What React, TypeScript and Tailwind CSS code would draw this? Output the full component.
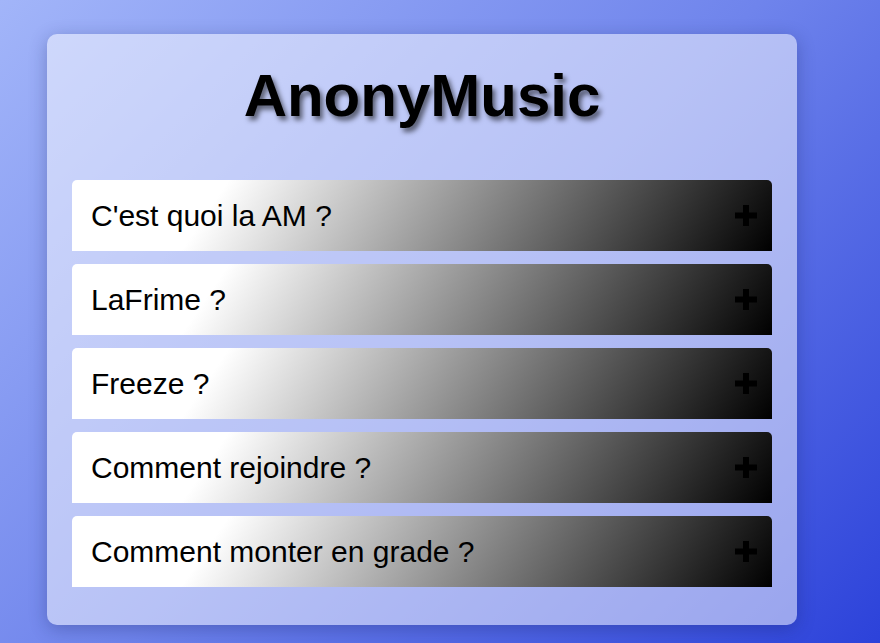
import React from 'react';

const questions = [
  "C'est quoi la AM ?",
  'LaFrime ?',
  'Freeze ?',
  'Comment rejoindre ?',
  'Comment monter en grade ?',
];

const PlusIcon = () => (
  <svg width="22" height="21" viewBox="0 0 22 21" className="shrink-0">
    <rect x="8" y="0" width="6" height="21" fill="#000" />
    <rect x="0" y="7.5" width="22" height="6" fill="#000" />
  </svg>
);

const App: React.FC = () => {
  return (
    <div
      className="min-h-screen w-full bg-[linear-gradient(135deg,#a2b5f9_0%,#6f84ec_50%,#2c42da_100%)] pt-[34px] pl-[47px]"
      style={{ fontFamily: '"Liberation Sans", Arial, sans-serif' }}
    >
      <div className="w-[750px] h-[591px] rounded-[10px] bg-white/50 shadow-[0_4px_18px_rgba(20,30,90,0.3)] pt-[27px] px-[25px]">
        <h1 className="text-center text-[60px] leading-[69px] font-bold text-black [text-shadow:3px_4px_5px_rgba(0,0,0,0.55)] mb-[50px]">
          AnonyMusic
        </h1>

        <div className="flex flex-col gap-[13px]">
          {questions.map(q => (
            <button
              key={q}
              className="h-[71px] w-full flex items-center justify-between pl-[19px] pr-[15px] rounded-t-[5px] bg-[linear-gradient(124deg,#ffffff_21%,#000000_100%)] text-left cursor-pointer"
            >
              <span className="text-[30px] leading-[34px] text-black">{q}</span>
              <PlusIcon />
            </button>
          ))}
        </div>
      </div>
    </div>
  );
};

export default App;
